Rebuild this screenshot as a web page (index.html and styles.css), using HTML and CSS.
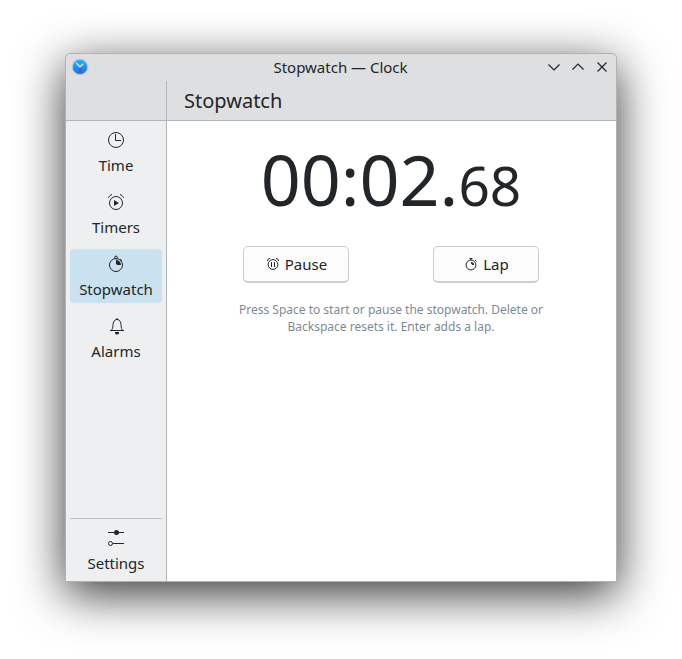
FILE: index.html
```html
<!DOCTYPE html>
<html lang="en">
<head>
<meta charset="utf-8">
<meta name="viewport" content="width=device-width, initial-scale=1">
<title>Stopwatch — Clock</title>
<link rel="stylesheet" href="styles.css">
</head>
<body>
<div class="window">
  <header class="titlebar">
    <svg class="app-icon" viewBox="0 0 18 18" aria-hidden="true">
      <defs><linearGradient id="face" x1="0" y1="0" x2="0" y2="1"><stop offset="0" stop-color="#20b4f8"/><stop offset="1" stop-color="#1f6fe5"/></linearGradient></defs>
      <circle cx="9" cy="9" r="8.400" fill="#c3c9ce" stroke="none"/>
      <circle cx="9" cy="9" r="7.200" fill="url(#face)" stroke="none"/>
      <path d="M9 9v5" stroke="#8f3f62" stroke-width="1.200"/>
      <path d="M5.200 4.800 9 8.800l3.200-3.200" fill="none" stroke="#e3f3ff" stroke-width="1.200"/>
    </svg>
    <span class="caption">Stopwatch — Clock</span>
    <div class="window-buttons">
      <button class="window-button" type="button" aria-label="Minimize"><svg viewBox="0 0 16 16"><path d="M2.500 5.500 8 11l5.500-5.500"/></svg></button>
      <button class="window-button" type="button" aria-label="Maximize"><svg viewBox="0 0 16 16"><path d="M2.500 10.500 8 5l5.500 5.500"/></svg></button>
      <button class="window-button" type="button" aria-label="Close"><svg viewBox="0 0 16 16"><path d="m3.500 3.500 9 9m0-9-9 9"/></svg></button>
    </div>
  </header>
  <div class="body">
    <aside class="sidebar">
      <div class="sidebar-head"></div>
      <nav class="nav">
        <a class="nav-item" href="#time">
          <svg class="nav-icon" viewBox="0 0 22 22"><circle cx="11" cy="11" r="7.500"/><path d="M10.500 5v6.500H16"/></svg>
          Time
        </a>
        <a class="nav-item" href="#timers">
          <svg class="nav-icon" viewBox="0 0 22 22"><circle cx="11" cy="12" r="6.500"/><path d="M3.500 6.800C4 5.200 5.200 4 7 3.500M18.500 6.800C18 5.200 16.800 4 15 3.500"/><path class="solid" d="M9 9v6l5-3z"/></svg>
          Timers
        </a>
        <a class="nav-item selected" href="#stopwatch" aria-current="page">
          <svg class="nav-icon" viewBox="0 0 22 22"><circle cx="11" cy="12" r="6.500"/><circle cx="11" cy="4.500" r="1.400"/><path d="m15 6 2 2"/><path class="solid" d="M11 7a5 5 0 0 1 5 5h-3.500L11 11z"/></svg>
          Stopwatch
        </a>
        <a class="nav-item" href="#alarms">
          <svg class="nav-icon" viewBox="0 0 22 22"><path d="M5 15.500h14M6.500 15.200C8.500 13 7.500 10 8.500 7.200 9.200 5.300 10.500 4.500 12 4.500s2.800.8 3.500 2.700c1 2.800 0 5.800 2 8"/><path d="M12 3v1.500"/><path class="solid" d="M10 17h4v1a2 1.500 0 0 1-4 0z"/></svg>
          Alarms
        </a>
        <a class="nav-item" id="settings" href="#settings">
          <svg class="nav-icon" viewBox="0 0 22 22"><path d="M3 5.500h16M8 16.500h11"/><circle class="solid" cx="11.500" cy="5.500" r="2.500"/><circle cx="5.500" cy="16.500" r="2"/></svg>
          Settings
        </a>
      </nav>
    </aside>
    <main class="page">
      <h1 class="page-title">Stopwatch</h1>
      <div class="content">
        <div class="clock" role="timer">00:02.<span class="hundredths">68</span></div>
        <div class="actions">
          <button class="action" type="button">
            <svg viewBox="0 0 16 16"><circle cx="8" cy="8.500" r="4.900"/><path d="M2.500 5C2.500 3.500 3.500 2.500 5 2.500M13.500 5C13.500 3.500 12.500 2.500 11 2.500M6.500 6v5M9.500 6v5"/></svg>
            Pause
          </button>
          <button class="action" type="button">
            <svg viewBox="0 0 16 16"><circle cx="8" cy="9" r="4.900"/><path d="M6.500 2.500h3M8 2.500V4M12 4l1.500 1.500"/><path class="solid" d="M8 6a3 3 0 0 1 3 3H9.500L8 7.500z"/></svg>
            Lap
          </button>
        </div>
        <p class="hint">Press Space to start or pause the stopwatch. Delete or Backspace resets it. Enter adds a lap.</p>
      </div>
    </main>
  </div>
</div>
</body>
</html>
```
FILE: styles.css
```css
* { box-sizing: border-box; }

body {
  margin: 0;
  min-height: 100vh;
  padding: 53px 65px 77px;
  display: flex;
  background: #fff;
  color: #232629;
  font: 15px/20px "Noto Sans", sans-serif;
}

button {
  font: inherit;
  color: inherit;
}

svg {
  fill: none;
  stroke: #232629;
}

.solid {
  fill: #232629;
  stroke: none;
}

.window {
  flex: 1;
  display: flex;
  flex-direction: column;
  border: 1px solid #b0b2b4;
  border-radius: 5px 5px 0 0;
  overflow: hidden;
  background: #dedfe1;
  box-shadow: 0 12px 48px rgba(0, 0, 0, .8);
}

.titlebar {
  display: grid;
  grid-template-columns: 1fr auto 1fr;
  align-items: center;
  height: 27px;
  padding: 0 6px 2px 5px;
}

.app-icon {
  width: 18px;
  height: 18px;
}

.window-buttons {
  display: flex;
  justify-content: flex-end;
  gap: 8px;
}

.window-button {
  display: flex;
  padding: 0;
  border: 0;
  background: none;
}

.window-button svg {
  width: 16px;
  height: 16px;
  stroke-width: 1.2;
}

.body {
  flex: 1;
  display: flex;
}

.sidebar {
  width: 101px;
  display: flex;
  flex-direction: column;
  border-right: 1px solid #b3b6b9;
  background: #eeeff1;
}

.sidebar-head {
  height: 40px;
  border-bottom: 1px solid #b3b6b9;
  background: #dedfe1;
}

.nav {
  flex: 1;
  display: flex;
  flex-direction: column;
  gap: 8px;
  padding: 4px;
}

.nav-item {
  display: flex;
  flex-direction: column;
  align-items: center;
  gap: 4px;
  padding: 4px 0;
  border-radius: 4px;
  color: inherit;
  text-decoration: none;
}

.nav-icon {
  width: 22px;
  height: 22px;
}

.selected {
  background: #cae2f0;
}

#settings {
  margin-top: auto;
  padding-top: 8px;
  border-top: 1px solid #bdc0c3;
  border-radius: 0;
}

.page {
  flex: 1;
  display: flex;
  flex-direction: column;
  background: #fff;
}

.page-title {
  margin: 0;
  height: 40px;
  padding: 0 17px;
  border-bottom: 1px solid #b3b6b9;
  background: #dedfe1;
  font-size: 20px;
  font-weight: 400;
  line-height: 39px;
}

.content {
  display: flex;
  flex-direction: column;
  align-items: center;
  padding: 12px 17px 12px 16px;
}

.clock {
  font-size: 70px;
  line-height: 92px;
}

.hundredths {
  font-size: 55px;
  line-height: 1;
}

.actions {
  display: flex;
  gap: 84px;
  margin-top: 21px;
}

.action {
  display: flex;
  align-items: center;
  justify-content: center;
  gap: 4px;
  width: 106px;
  height: 37px;
  padding: 0;
  border: 1px solid #cbcdce;
  border-bottom-width: 2px;
  border-radius: 5px;
  background: #fcfcfc;
}

.action svg {
  width: 16px;
  height: 16px;
}

.hint {
  max-width: 320px;
  margin: 18px 0 0;
  color: #7c8a97;
  font-size: 12px;
  line-height: 17px;
  text-align: center;
}
```
